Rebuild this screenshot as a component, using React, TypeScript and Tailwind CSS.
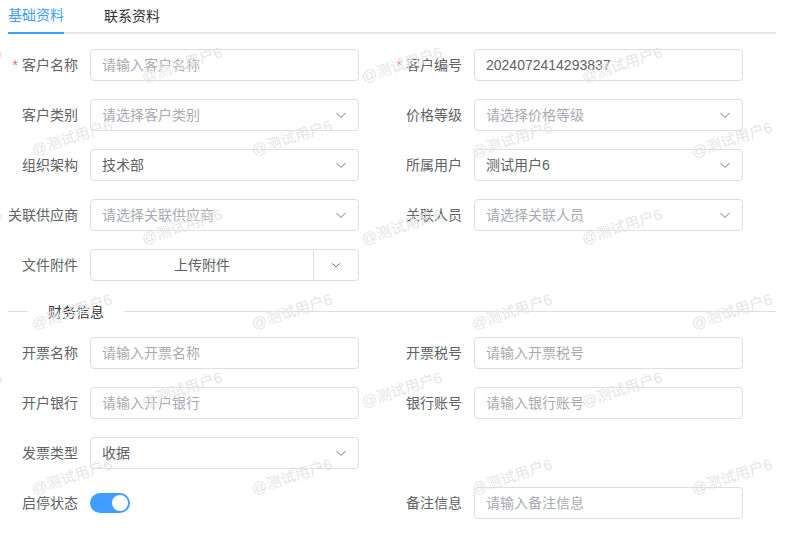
import React from "react";

const marks = [
  // row A
  { x: 72, y: -28 }, { x: 292, y: -28 }, { x: 512, y: -28 }, { x: 732, y: -28 },
  { x: 72, y: 138 }, { x: 292, y: 138 }, { x: 512, y: 140 }, { x: 732, y: 140 },
  { x: 72, y: 312 }, { x: 292, y: 312 }, { x: 512, y: 312 }, { x: 732, y: 312 },
  { x: 72, y: 477 }, { x: 292, y: 477 }, { x: 512, y: 477 }, { x: 732, y: 477 },
  // row B
  { x: -38, y: 65 }, { x: 182, y: 65 }, { x: 402, y: 65 }, { x: 622, y: 65 },
  { x: -38, y: 227 }, { x: 182, y: 227 }, { x: 402, y: 227 }, { x: 622, y: 227 },
  { x: -38, y: 390 }, { x: 182, y: 390 }, { x: 402, y: 390 }, { x: 622, y: 390 },
  { x: 842, y: 227 }, { x: 842, y: 390 },
];

function Chevron({ className }: { className?: string }) {
  return (
    <svg viewBox="0 0 14 14" className={className} fill="none" stroke="currentColor" strokeWidth="1.1">
      <path d="M2.5 5 L7 9.5 L11.5 5" />
    </svg>
  );
}

function Label({ text, required }: { text: string; required?: boolean }) {
  return (
    <label className="w-[82px] shrink-0 pr-3 text-right text-sm text-[#606266] whitespace-nowrap">
      {required && <span className="text-[#f56c6c] mr-1">*</span>}
      {text}
    </label>
  );
}

function Input({ placeholder, value }: { placeholder?: string; value?: string }) {
  return (
    <div className="h-8 w-[269px] flex items-center border border-[#dcdfe6] rounded px-[11px] text-sm">
      {value ? (
        <span className="text-[#606266]">{value}</span>
      ) : (
        <span className="text-[#a8abb2]">{placeholder}</span>
      )}
    </div>
  );
}

function Select({ placeholder, value }: { placeholder?: string; value?: string }) {
  return (
    <div className="h-8 w-[269px] flex items-center border border-[#dcdfe6] rounded pl-[11px] pr-[10px] text-sm">
      <span className={value ? "flex-1 text-[#606266]" : "flex-1 text-[#a8abb2]"}>
        {value || placeholder}
      </span>
      <Chevron className="w-[14px] h-[14px] text-[#a8abb2]" />
    </div>
  );
}

function Field({ children }: { children: React.ReactNode }) {
  return <div className="flex items-center h-8">{children}</div>;
}

export default function App() {
  return (
    <div className="relative w-[798px] h-[533px] overflow-hidden bg-white font-[family-name:'Liberation_Sans','Noto_Sans_CJK_SC',sans-serif]">
      <div className="ml-2 w-[768px] flex border-b-2 border-[#e4e7ed] text-sm">
        <div className="flex items-center border-b-2 border-[#409eff] -mb-[2px] h-[34px] pb-[2px] text-[#409eff]">
          基础资料
        </div>
        <div className="h-8 flex items-center pl-10 text-[#303133]">联系资料</div>
      </div>

      <div className="ml-2 w-[768px] pt-[15px]">
        <div className="grid grid-cols-2 gap-y-[18px]">
          <Field>
            <Label text="客户名称" required />
            <Input placeholder="请输入客户名称" />
          </Field>
          <Field>
            <Label text="客户编号" required />
            <Input value="2024072414293837" />
          </Field>
          <Field>
            <Label text="客户类别" />
            <Select placeholder="请选择客户类别" />
          </Field>
          <Field>
            <Label text="价格等级" />
            <Select placeholder="请选择价格等级" />
          </Field>
          <Field>
            <Label text="组织架构" />
            <Select value="技术部" />
          </Field>
          <Field>
            <Label text="所属用户" />
            <Select value="测试用户6" />
          </Field>
          <Field>
            <Label text="关联供应商" />
            <Select placeholder="请选择关联供应商" />
          </Field>
          <Field>
            <Label text="关联人员" />
            <Select placeholder="请选择关联人员" />
          </Field>
          <Field>
            <Label text="文件附件" />
            <div className="h-8 w-[269px] flex border border-[#dcdfe6] rounded text-sm text-[#606266]">
              <div className="flex-1 flex items-center justify-center border-r border-[#dcdfe6]">上传附件</div>
              <div className="w-[44px] flex items-center justify-center">
                <Chevron className="w-3 h-3 text-[#606266]" />
              </div>
            </div>
          </Field>
          <div />
        </div>

        <div className="relative mt-[30px] mb-[25px] h-px bg-[#dcdfe6]">
          <span className="absolute left-5 top-1/2 -translate-y-1/2 bg-white px-5 text-sm text-[#303133]">
            财务信息
          </span>
        </div>

        <div className="grid grid-cols-2 gap-y-[18px]">
          <Field>
            <Label text="开票名称" />
            <Input placeholder="请输入开票名称" />
          </Field>
          <Field>
            <Label text="开票税号" />
            <Input placeholder="请输入开票税号" />
          </Field>
          <Field>
            <Label text="开户银行" />
            <Input placeholder="请输入开户银行" />
          </Field>
          <Field>
            <Label text="银行账号" />
            <Input placeholder="请输入银行账号" />
          </Field>
          <Field>
            <Label text="发票类型" />
            <Select value="收据" />
          </Field>
          <div />
          <Field>
            <Label text="启停状态" />
            <div className="w-10 h-5 rounded-full bg-[#409eff] flex items-center justify-end pr-0.5">
              <div className="w-4 h-4 rounded-full bg-white" />
            </div>
          </Field>
          <Field>
            <Label text="备注信息" />
            <Input placeholder="请输入备注信息" />
          </Field>
        </div>
      </div>

      <div className="pointer-events-none absolute inset-0">
        {marks.map((m, i) => (
          <span
            key={i}
            className="absolute -translate-x-1/2 -translate-y-1/2 -rotate-[18deg] whitespace-nowrap text-[15px] text-[#e6e6e6]"
            style={{ left: m.x, top: m.y }}
          >
            @测试用户6
          </span>
        ))}
      </div>
    </div>
  );
}
